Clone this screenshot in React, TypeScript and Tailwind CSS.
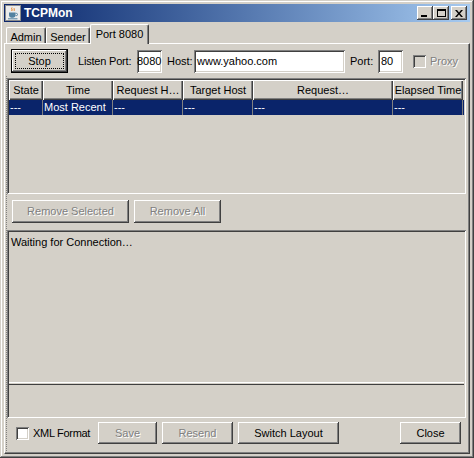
import type { ReactNode } from 'react'

// Windows classic bevels
const frame = 'shadow-[inset_-1px_-1px_0_#404040,inset_1px_1px_0_#d4d0c8,inset_-2px_-2px_0_#808080,inset_2px_2px_0_#fff]'
const raised = 'shadow-[inset_-1px_-1px_0_#404040,inset_1px_1px_0_#fff,inset_-2px_-2px_0_#808080]'
const sunken = 'shadow-[inset_1px_1px_0_#808080,inset_-1px_-1px_0_#fff,inset_2px_2px_0_#404040,inset_-2px_-2px_0_#d4d0c8]'
const etched = 'text-[#808080] [text-shadow:1px_1px_0_#fff]'

const columns = [
  { label: 'State', w: 'w-[34px]', cell: '---' },
  { label: 'Time', w: 'w-[70px]', cell: 'Most Recent' },
  { label: 'Request H…', w: 'w-[70px]', cell: '---' },
  { label: 'Target Host', w: 'w-[70px]', cell: '---' },
  { label: 'Request…', w: 'w-[140px]', cell: '---' },
  { label: 'Elapsed Time', w: 'w-[70px]', cell: '---' },
]

function Btn({ label, className = '', disabled }: { label: string; className?: string; disabled?: boolean }) {
  return (
    <div className={`flex items-center justify-center bg-[#d4d0c8] ${raised} ${disabled ? etched : ''} ${className}`}>
      {label}
    </div>
  )
}

function Field({ text, className = '', clip }: { text: string; className?: string; clip?: boolean }) {
  return (
    <div className={`flex h-[23px] items-center overflow-hidden bg-white p-[2px] ${sunken} ${className}`}>
      <span className={`relative whitespace-nowrap ${clip ? '-left-[2px]' : 'pl-[1px]'}`}>{text}</span>
    </div>
  )
}

function Check({ disabled, className = '' }: { disabled?: boolean; className?: string }) {
  return <div className={`h-[13px] w-[13px] shrink-0 ${disabled ? 'bg-[#d4d0c8]' : 'bg-white'} ${sunken} ${className}`} />
}

function TBtn({ children, className = '' }: { children: ReactNode; className?: string }) {
  return (
    <div className={`flex h-[14px] w-[16px] items-center justify-center bg-[#d4d0c8] ${raised} ${className}`}>
      {children}
    </div>
  )
}

function JavaIcon() {
  return (
    <svg width="16" height="16" viewBox="0 0 16 16" className="shrink-0">
      <rect x="0.5" y="0.5" width="15" height="15" fill="#ececec" stroke="#8c8c8c" />
      <path d="M7 2.5c-1.2 1 1 2-0.3 3.5M9.3 3.2c-1 0.9 0.8 1.4-0.2 2.6" stroke="#e76f00" fill="none" strokeWidth="0.9" />
      <path d="M4 7.5h6.5v2.8a2.4 2.4 0 0 1-2.4 2.4H6.4A2.4 2.4 0 0 1 4 10.3z" fill="#5382a1" />
      <path d="M10.5 8.3h0.8a1.2 1.2 0 0 1 0 2.4h-0.8" stroke="#5382a1" fill="none" />
      <path d="M3 13.8h9.5" stroke="#5382a1" />
    </svg>
  )
}

function Tab({ label, className, selected }: { label: string; className: string; selected?: boolean }) {
  return (
    <div
      className={`flex justify-center rounded-t-[2px] border-l border-t border-white border-r border-r-[#404040] bg-[#d4d0c8] shadow-[inset_-1px_0_0_#808080] ${
        selected ? 'relative z-10 -mb-px h-[20px] pt-[4px]' : 'h-[16px] pt-[4px]'
      } ${className}`}
    >
      {label}
    </div>
  )
}

export default function App() {
  return (
    <div className="font-['Liberation_Sans',Arial,sans-serif] text-[11px] leading-none text-black">
      <div className={`flex h-[458px] w-[474px] flex-col bg-[#d4d0c8] p-[4px] ${frame}`}>
        {/* title bar */}
        <div className="flex h-[18px] shrink-0 items-center bg-linear-to-r from-[#0a246a] to-[#a6caf0] pl-[1px] pr-[3px]">
          <JavaIcon />
          <span className="ml-[3px] text-[12px] font-bold text-white">TCPMon</span>
          <div className="ml-auto flex items-center">
            <TBtn>
              <div className="mt-[6px] mr-[2px] h-[2px] w-[6px] bg-black" />
            </TBtn>
            <TBtn>
              <div className="h-[8px] w-[9px] border border-t-2 border-black" />
            </TBtn>
            <TBtn className="ml-[2px]">
              <svg width="8" height="7" viewBox="0 0 8 7">
                <path d="M0 0h2l2 2.5L6 0h2L5 3.5 8 7H6L4 4.5 2 7H0l3-3.5z" fill="#000" />
              </svg>
            </TBtn>
          </div>
        </div>

        {/* tabs */}
        <div className="flex h-[21px] shrink-0 items-end pl-[2px]">
          <Tab label="Admin" className="w-[40px]" />
          <Tab label="Sender" className="w-[44px]" />
          <Tab label="Port 8080" className="w-[59px]" selected />
        </div>

        <div className="flex h-[411px] flex-col border border-white border-r-[#404040] border-b-[#404040] shadow-[inset_-1px_-1px_0_#808080]">
          {/* listener row */}
          <div className="ml-[6px] mt-[5px] flex h-[24px] items-center">
            <div className="flex h-[24px] w-[57px] border border-black bg-[#d4d0c8]">
              <div className={`flex flex-1 p-[3px] ${raised}`}>
                <div className="flex flex-1 items-center justify-center border border-dotted border-black">Stop</div>
              </div>
            </div>
            <span className="ml-[10px] w-[59px] tracking-[-0.2px]">Listen Port:</span>
            <Field text="8080" className="w-[25px]" clip />
            <span className="ml-[5px] w-[27px]">Host:</span>
            <Field text="www.yahoo.com" className="w-[151px]" />
            <span className="ml-[5px] w-[28px]">Port:</span>
            <Field text="80" className="w-[25px]" />
            <Check disabled className="ml-[10px]" />
            <span className={`ml-[4px] ${etched}`}>Proxy</span>
          </div>

          {/* split pane */}
          <div className="ml-[1px] mt-[3px] flex flex-1 flex-col border-l border-dotted border-[#808080]">
            <div className={`mt-[2px] h-[116px] w-[459px] p-[2px] ${sunken}`}>
              <div className="flex h-[20px]">
                {columns.map((c) => (
                  <div
                    key={c.label}
                    className={`flex shrink-0 items-center justify-center overflow-hidden whitespace-nowrap ${c.w} shadow-[inset_1px_1px_0_#fff,inset_-1px_-1px_0_#404040,inset_-2px_-2px_0_#808080]`}
                  >
                    {c.label}
                  </div>
                ))}
              </div>
              <div className="flex h-[15px] bg-[#0a246a] text-white">
                {columns.map((c) => (
                  <div key={c.label} className={`flex shrink-0 items-center border-r border-[#808080] pl-[1px] ${c.w}`}>
                    {c.cell}
                  </div>
                ))}
              </div>
            </div>

            <div className="ml-[5px] mt-[6px] flex h-[23px]">
              <Btn label="Remove Selected" className="w-[117px]" disabled />
              <Btn label="Remove All" className="ml-[5px] w-[87px]" disabled />
            </div>

            <div className={`mt-[7px] flex h-[188px] w-[459px] flex-col p-[2px] ${sunken}`}>
              <div className="h-[150px] pl-[2px] pt-[5px]">Waiting for Connection…</div>
              <div className="h-[3px] border-t border-b border-t-white border-b-[#404040]" />
              <div className="flex-1" />
            </div>

            <div className="mt-[4px] flex h-[22px]">
              <div className="flex w-[91px] items-center">
                <Check className="ml-[9px]" />
                <span className="ml-[4px] tracking-[-0.3px]">XML Format</span>
              </div>
              <Btn label="Save" className="w-[59px]" disabled />
              <Btn label="Resend" className="ml-[5px] w-[71px]" disabled />
              <Btn label="Switch Layout" className="ml-[5px] w-[101px]" />
              <Btn label="Close" className="ml-[61px] w-[61px]" />
            </div>
          </div>
        </div>
      </div>
    </div>
  )
}
